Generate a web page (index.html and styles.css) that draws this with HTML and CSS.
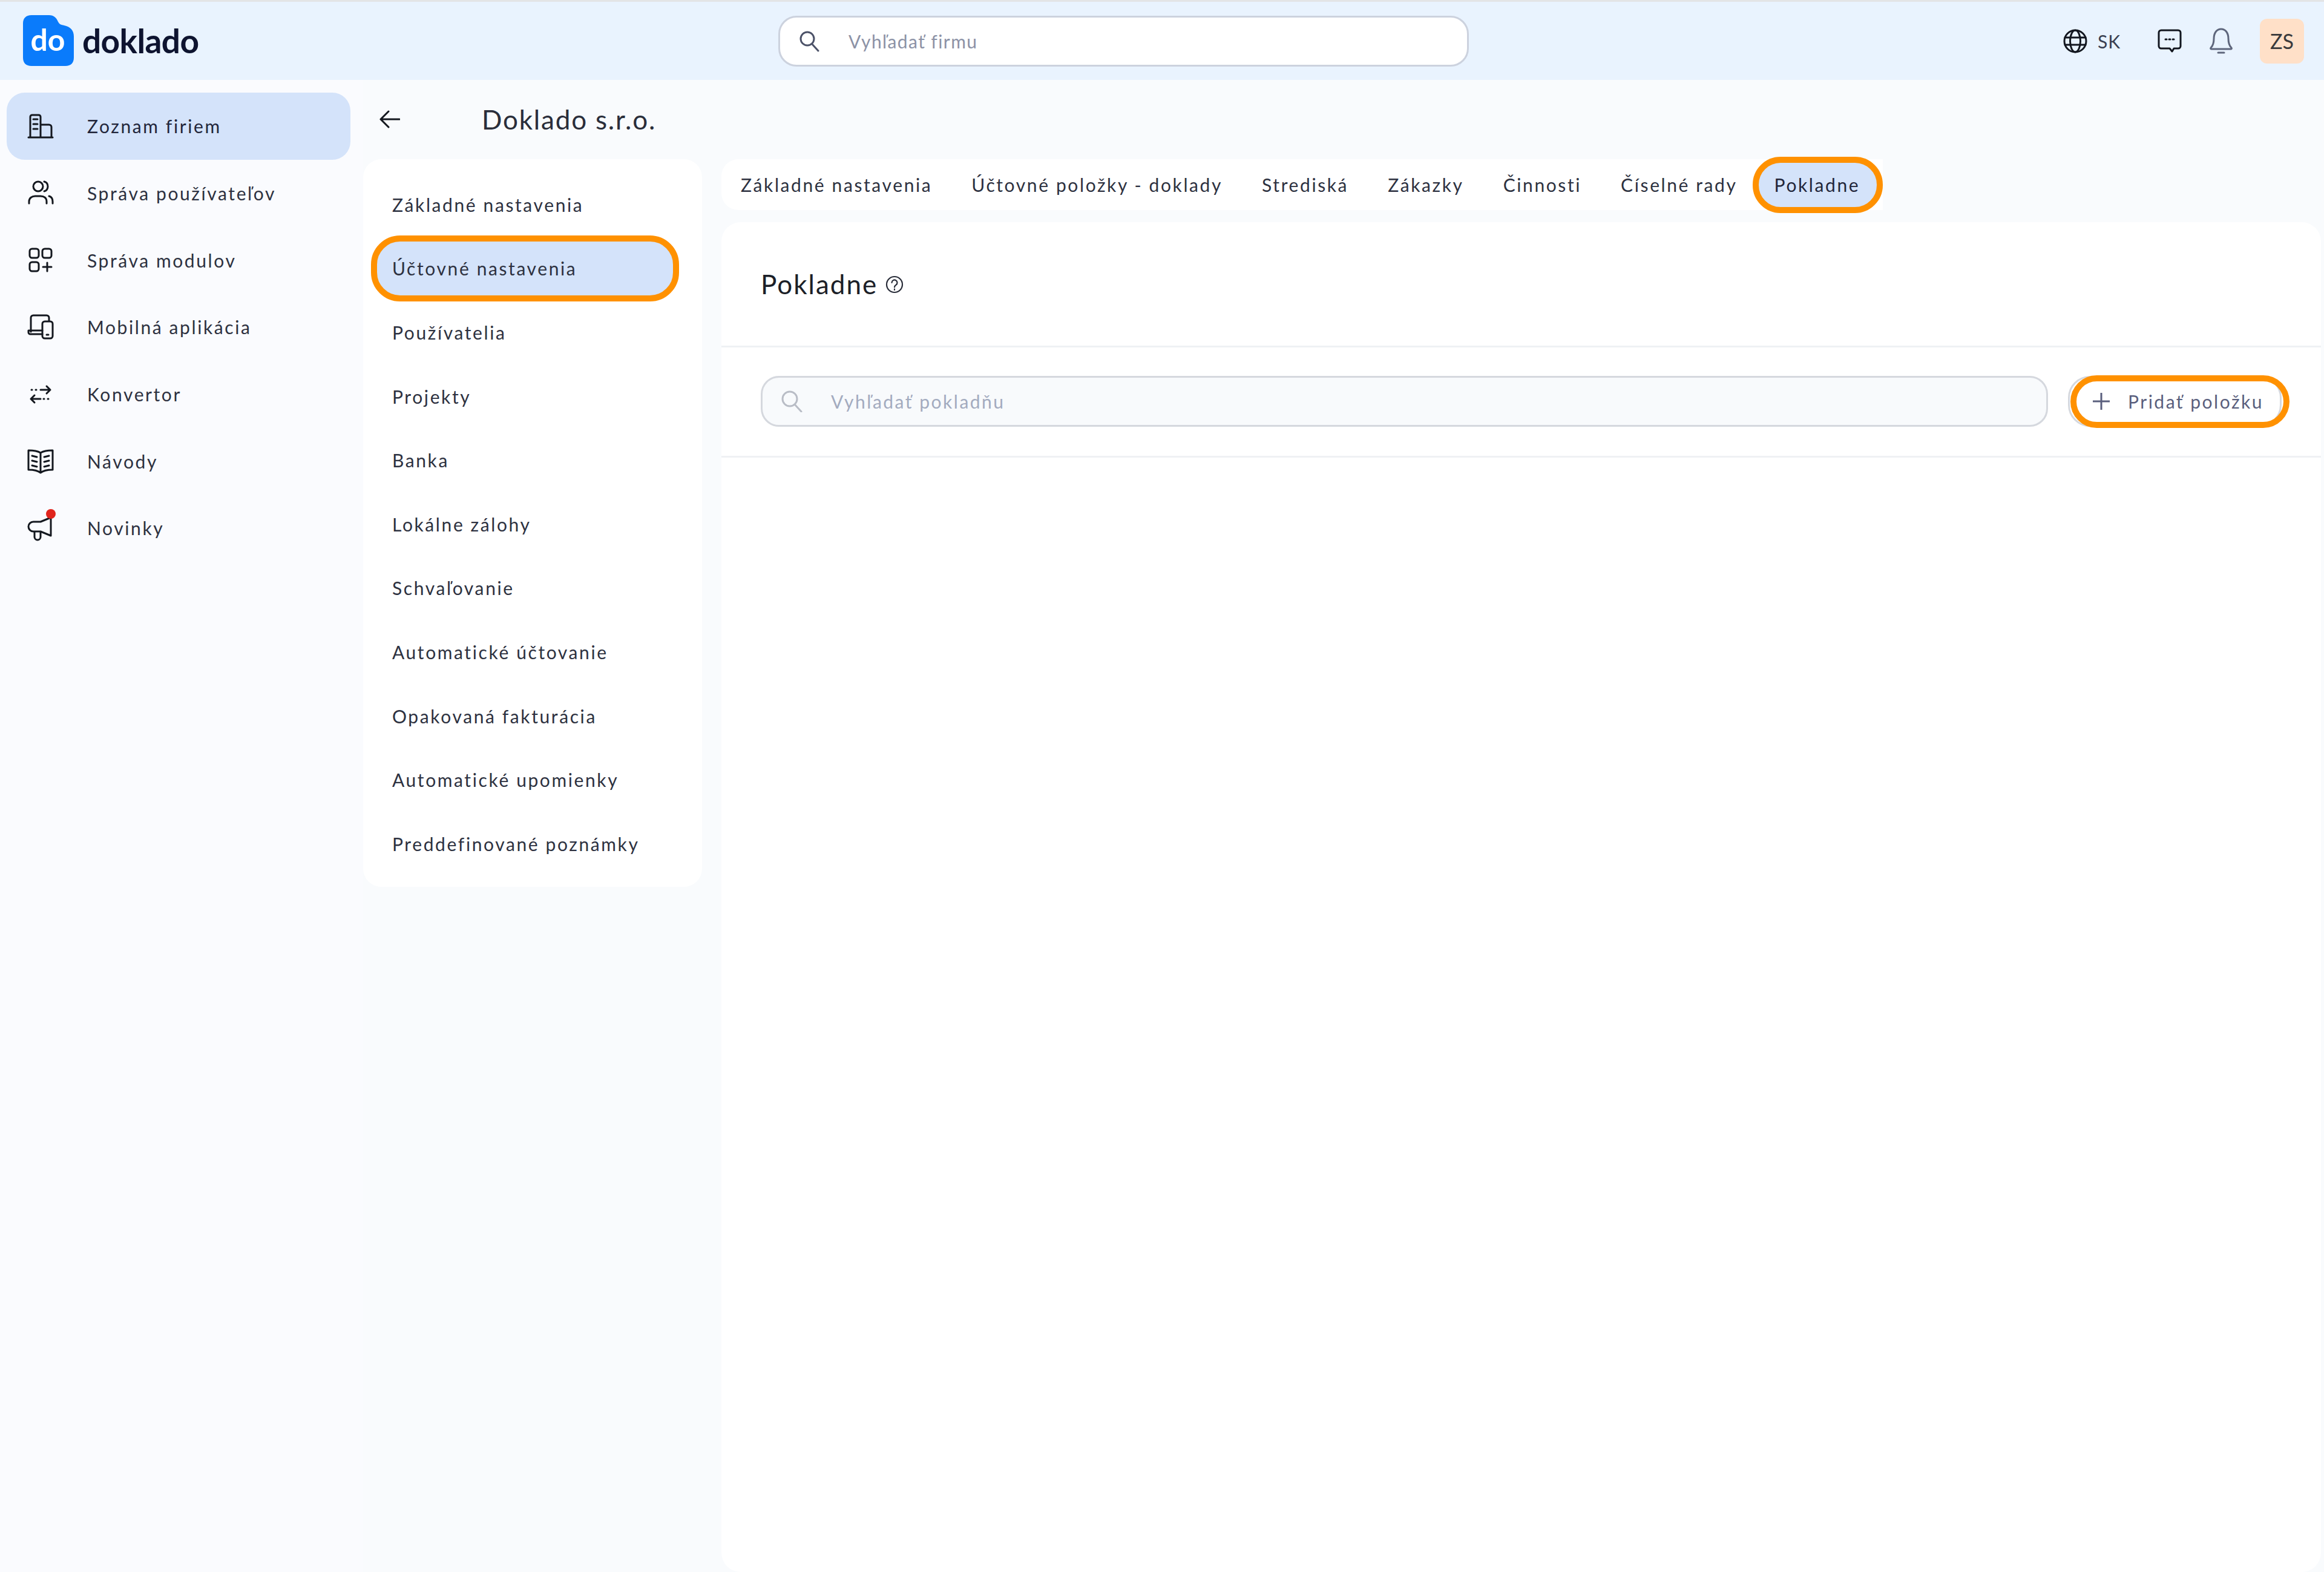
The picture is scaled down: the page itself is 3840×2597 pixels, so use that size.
FILE: index.html
```html
<!DOCTYPE html>
<html lang="sk">
<head>
  <meta charset="UTF-8">
  <meta name="viewport" content="width=device-width, initial-scale=1.0">
  <title>Doklado - Pokladne</title>
  <link rel="stylesheet" href="styles.css">
</head>
<body>
  <header class="topbar">
    <div class="brand">
      <svg class="brand-mark" viewBox="0 0 84 84">
        <path fill="#0a7bfb" d="M14 0h29c8 0 12 4 15 11 2 4 5 5 10 6 10 2 16 8 16 18v35c0 9-5 14-14 14H14C5 84 0 79 0 70V14C0 5 5 0 14 0z"/>
        <text class="brand-do" x="41" y="59" text-anchor="middle">do</text>
      </svg>
      <span class="brand-name">doklado</span>
    </div>

    <div class="top-search">
      <svg class="ico-search" viewBox="0 0 36 36"><circle cx="15" cy="14" r="11"/><path d="M23 23l10 11"/></svg>
      <span>Vyhľadať firmu</span>
    </div>

    <div class="top-actions">
      <svg class="ico-top globe" viewBox="0 0 40 40">
        <circle cx="20" cy="20" r="18"/><ellipse cx="20" cy="20" rx="8.5" ry="18"/><path d="M3 14h34M3 26h34"/>
      </svg>
      <span class="lang">SK</span>
      <svg class="ico-top chat" viewBox="0 0 40 40">
        <path d="M6 2h28a4 4 0 0 1 4 4v22a4 4 0 0 1-4 4h-7l-3 5-4-5H6a4 4 0 0 1-4-4V6a4 4 0 0 1 4-4z"/>
        <path class="dots" d="M13 17h2M19 17h2M25 17h2"/>
      </svg>
      <svg class="ico-top bell" viewBox="0 0 40 44">
        <path d="M3 33c4-4 5-8 5-15C8 8 13 2 20 2s12 6 12 16c0 7 1 11 5 15 1 1 0 2-1 2H4c-1 0-2-1-1-2z"/>
        <path d="M15 41h10"/>
      </svg>
      <div class="avatar">ZS</div>
    </div>
  </header>

  <div class="layout">
    <nav class="sidebar">
      <a class="nav-item active">
        <svg class="nav-ico" viewBox="0 0 44 44"><path d="M2 41h40M5 41V7a3 3 0 0 1 3-3h11a3 3 0 0 1 3 3v34M22 20h14a4 4 0 0 1 4 4v17M10 11h7M10 19h7M10 27h7"/></svg>
        Zoznam firiem
      </a>
      <a class="nav-item">
        <svg class="nav-ico" viewBox="0 0 44 44"><circle cx="18" cy="11" r="8"/><path d="M3 39v-3c0-6 5-9 10-9h9c6 0 10 3 10 9v3M28 3c4 1 6 4 6 8s-2 7-6 8M36 27c4 1 6 4 6 9v3"/></svg>
        Správa používateľov
      </a>
      <a class="nav-item">
        <svg class="nav-ico" viewBox="0 0 44 44"><rect x="4" y="3" width="15" height="15" rx="4"/><rect x="25" y="3" width="15" height="15" rx="4"/><rect x="4" y="25" width="15" height="15" rx="4"/><path d="M33 26v14M26 33h14"/></svg>
        Správa modulov
      </a>
      <a class="nav-item">
        <svg class="nav-ico" viewBox="0 0 44 44"><path d="M6 30V7a4 4 0 0 1 4-4h22a4 4 0 0 1 4 4v5M25 34H5a3 3 0 0 1-3-3v-3h23"/><rect x="25" y="13" width="17" height="28" rx="4"/><path d="M32 35h3"/></svg>
        Mobilná aplikácia
      </a>
      <a class="nav-item">
        <svg class="nav-ico thin" viewBox="0 0 44 44"><path class="dotted" d="M7 15h10"/><path d="M22 15h16M32 9l6 6-6 6"/><path class="dotted" d="M27 30h10"/><path d="M22 30H6M12 24l-6 6 6 6"/></svg>
        Konvertor
      </a>
      <a class="nav-item">
        <svg class="nav-ico" viewBox="0 0 44 44"><path d="M2 4c8 0 15 1 20 4 5-3 12-4 20-4v32c-8 0-15 1-20 5-5-4-12-5-20-5zM22 8v33M8 13l8 2M8 21l8 2M8 29l8 2M36 13l-8 2M36 21l-8 2M36 29l-8 2"/></svg>
        Návody
      </a>
      <a class="nav-item">
        <span class="news-ico">
          <svg class="nav-ico" viewBox="0 0 44 44"><path d="M10 12h12l17-7v30l-17-7H10a8 8 0 0 1 0-16zM12 28v9a5 5 0 0 0 10 0v-9"/></svg>
          <i class="dot"></i>
        </span>
        Novinky
      </a>
    </nav>

    <main class="content">
      <div class="title-row">
        <svg class="back" viewBox="0 0 34 30"><path d="M33 15H2M15 2L2 15l13 13"/></svg>
        <h1>Doklado s.r.o.</h1>
      </div>

      <div class="columns">
        <aside class="panel">
          <a class="panel-item">Základné nastavenia</a>
          <a class="panel-item marked">Účtovné nastavenia</a>
          <a class="panel-item">Používatelia</a>
          <a class="panel-item">Projekty</a>
          <a class="panel-item">Banka</a>
          <a class="panel-item">Lokálne zálohy</a>
          <a class="panel-item">Schvaľovanie</a>
          <a class="panel-item">Automatické účtovanie</a>
          <a class="panel-item">Opakovaná fakturácia</a>
          <a class="panel-item">Automatické upomienky</a>
          <a class="panel-item">Preddefinované poznámky</a>
        </aside>

        <section class="detail">
          <div class="tabs">
            <a class="tab">Základné nastavenia</a>
            <a class="tab">Účtovné položky - doklady</a>
            <a class="tab">Strediská</a>
            <a class="tab">Zákazky</a>
            <a class="tab">Činnosti</a>
            <a class="tab">Číselné rady</a>
            <a class="tab marked">Pokladne</a>
          </div>

          <div class="card">
            <div class="card-head">
              <h2>Pokladne</h2>
              <svg class="help" viewBox="0 0 30 30"><circle cx="15" cy="15" r="13"/><path d="M10.5 12a4.5 4.5 0 1 1 7 3.7c-1.6 1-2.5 2-2.5 3.8M15 22.5v1.5"/></svg>
            </div>
            <div class="toolbar">
              <div class="search">
                <svg class="ico-search pale" viewBox="0 0 36 36"><circle cx="15" cy="14" r="12"/><path d="M23 23l11 12"/></svg>
                <span>Vyhľadať pokladňu</span>
              </div>
              <button class="add">
                <svg class="plus" viewBox="0 0 28 28"><path d="M14 0v28M0 14h28"/></svg>
                Pridať položku
                <span class="ring"></span>
              </button>
            </div>
          </div>
        </section>
      </div>
    </main>
  </div>
</body>
</html>
```

FILE: styles.css
```css
* {
  box-sizing: border-box;
}

body {
  margin: 0;
  height: 2597px;
  overflow: hidden;
  font-family: 'Lato', sans-serif;
  font-size: 30px;
  color: #2a2e3a;
  background-color: #f9fbfd;
  border-top: 3px solid #e3e4e6;
  display: flex;
  flex-direction: column;
}

svg {
  display: block;
  flex-shrink: 0;
  fill: none;
  stroke: currentColor;
  stroke-linecap: round;
  stroke-linejoin: round;
}

/* top bar */
.topbar {
  height: 129px;
  background-color: #e9f3fe;
  display: flex;
  align-items: center;
  position: relative;
  padding: 0 33px 0 38px;
}

.brand {
  display: flex;
  align-items: center;
  gap: 14px;
  width: 1248px;
  margin-top: -2px;
}

.brand-mark {
  width: 84px;
  height: 84px;
  stroke: none;
}

.brand-do {
  fill: #fff;
  font-family: 'Lato', sans-serif;
  font-size: 50px;
  font-weight: 700;
}

.brand-name {
  font-size: 55px;
  font-weight: 700;
  letter-spacing: -0.6px;
  color: #0e1430;
}

.top-search {
  width: 1141px;
  height: 84px;
  background-color: #fff;
  border: 3px solid #ccd2de;
  border-radius: 30px;
  display: flex;
  align-items: center;
  padding-left: 30px;
  gap: 47px;
  color: #8c92a6;
  font-size: 30px;
  letter-spacing: 1.4px;
}

.ico-search {
  width: 36px;
  height: 36px;
  stroke-width: 3;
  color: #4c5268;
}

.ico-search.pale {
  color: #b9bdc6;
}

.top-actions {
  margin-left: auto;
  display: flex;
  align-items: center;
}

.ico-top {
  stroke-width: 3;
  color: #12161f;
}

.globe {
  width: 40px;
  height: 40px;
}

.lang {
  margin: 0 61px 0 17px;
  width: 38px;
  font-size: 30px;
  letter-spacing: 1px;
  color: #3a3f50;
}

.chat {
  width: 40px;
  height: 40px;
}

.chat .dots {
  stroke-width: 3;
}

.bell {
  width: 40px;
  height: 44px;
  margin: 0 44px 0 45px;
  color: #5e667c;
}

.avatar {
  width: 73px;
  height: 74px;
  background-color: #ffe0c8;
  border-radius: 12px;
  display: flex;
  align-items: center;
  justify-content: center;
  font-size: 34px;
  color: #3a3a3c;
}

/* page layout */
.layout {
  flex: 1;
  display: flex;
  min-height: 0;
}

.sidebar {
  width: 600px;
  padding: 21px 21px 0 11px;
  background-color: #fafbfe;
  flex-shrink: 0;
}

.nav-item {
  height: 110.7px;
  display: flex;
  align-items: center;
  padding-left: 34px;
  gap: 55px;
  font-size: 30px;
  letter-spacing: 2.6px;
  color: #2d3140;
  border-radius: 30px;
}

.nav-item.active {
  background-color: #d4e3fa;
  color: #22263a;
}

.nav-ico {
  width: 44px;
  height: 44px;
  stroke-width: 3;
  color: #14181f;
}

.nav-ico.thin .dotted {
  stroke-dasharray: 1 6;
}

.news-ico {
  position: relative;
  display: block;
}

.dot {
  position: absolute;
  top: -9px;
  right: -3px;
  width: 16px;
  height: 16px;
  border-radius: 50%;
  background-color: #e0241c;
}

.content {
  flex: 1;
  min-width: 0;
}

.title-row {
  height: 131px;
  display: flex;
  align-items: center;
  padding: 0 0 2px 27px;
}

.back {
  width: 34px;
  height: 30px;
  stroke-width: 3;
  color: #14181f;
  margin-right: 135px;
}

h1 {
  margin: 0;
  font-size: 44px;
  font-weight: 400;
  letter-spacing: 1.8px;
  color: #2a2e3a;
}

.columns {
  display: flex;
  gap: 32px;
  align-items: flex-start;
}

/* settings list */
.panel {
  width: 560px;
  height: 1202px;
  flex-shrink: 0;
  padding: 22px 38px 0 13px;
  background-color: #fff;
  border-radius: 30px;
}

.panel-item {
  height: 105.6px;
  display: flex;
  align-items: center;
  padding-left: 35px;
  font-size: 30px;
  letter-spacing: 2.6px;
  color: #2d3140;
}

.panel-item.marked {
  height: 109px;
  margin: -2px 0 -1.4px;
  padding-left: 25px;
  background-color: #d4e3fa;
  border: 10px solid #ff9100;
  border-radius: 48px;
}

/* right part */
.detail {
  flex: 1;
  min-width: 0;
  padding-right: 5px;
}

.tabs {
  height: 84px;
  display: flex;
  align-items: center;
  width: fit-content;
  padding-left: 32px;
  gap: 65px;
  background-color: #fff;
  border-radius: 28px 0 0 28px;
  font-size: 30px;
  letter-spacing: 2.6px;
  color: #2d3140;
}

.tab.marked {
  margin-left: -40px;
  height: 93px;
  display: flex;
  align-items: center;
  padding: 0 28px 0 26px;
  background-color: #d4e3fa;
  border: 10px solid #ff9100;
  border-radius: 46px;
  color: #22263a;
}

.card {
  margin-top: 20px;
  height: 2230px;
  background-color: #fff;
  border-radius: 32px;
}

.card-head {
  height: 207px;
  display: flex;
  align-items: center;
  gap: 13px;
  padding-left: 65px;
  border-bottom: 3px solid #eff1f4;
}

h2 {
  margin: 0;
  font-size: 44px;
  font-weight: 400;
  letter-spacing: 2px;
  color: #1c1f28;
}

.help {
  width: 30px;
  height: 30px;
  margin-top: 2px;
  stroke-width: 2.2;
  color: #2a2e3a;
}

.toolbar {
  height: 182px;
  display: flex;
  align-items: center;
  padding: 0 0 2px 65px;
  border-bottom: 3px solid #eff1f4;
}

.search {
  width: 2127px;
  height: 84px;
  background-color: #f8fafc;
  border: 3px solid #d5d8de;
  border-radius: 30px;
  display: flex;
  align-items: center;
  padding-left: 30px;
  gap: 47px;
  color: #a3abbf;
  font-size: 30px;
  letter-spacing: 2.5px;
}

.add {
  position: relative;
  margin-left: 33px;
  width: 353px;
  height: 84px;
  padding: 0 0 0 38px;
  display: flex;
  align-items: center;
  gap: 30px;
  background-color: #fff;
  border: 3px solid #d5d8de;
  border-radius: 36px;
  font-family: inherit;
  font-size: 30px;
  letter-spacing: 2.5px;
  color: #5a5f7d;
}

.plus {
  width: 28px;
  height: 28px;
  stroke-width: 3;
}

.ring {
  position: absolute;
  top: -4px;
  bottom: -5px;
  left: 1px;
  right: -16px;
  border: 10px solid #ff9100;
  border-radius: 44px;
}
```
